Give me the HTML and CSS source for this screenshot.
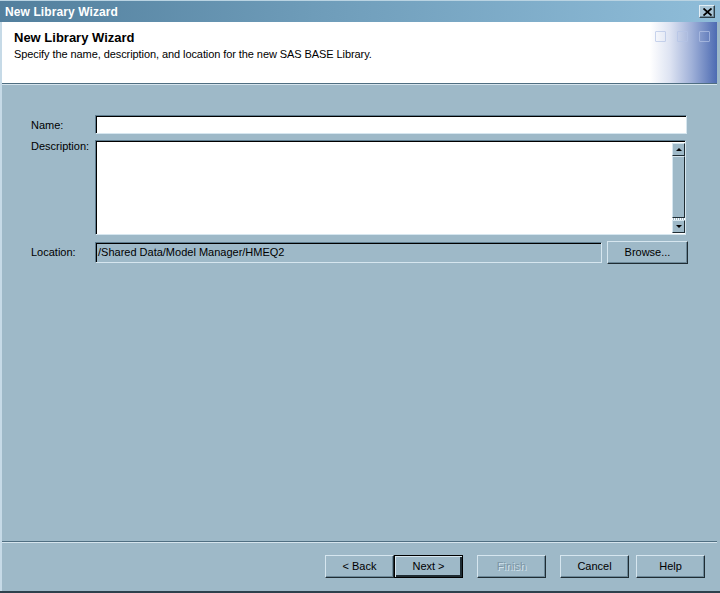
FILE: index.html
```html
<!DOCTYPE html>
<html>
<head>
<meta charset="utf-8">
<title>New Library Wizard</title>
<link rel="stylesheet" href="styles.css">
</head>
<body>
<div class="window">
  <div class="titlebar">
    <span class="title-text">New Library Wizard</span>
    <button class="close-btn" aria-label="Close">
      <svg width="9" height="8" viewBox="0 0 9 8"><path d="M0.5 0.5 L8.5 7.5 M8.5 0.5 L0.5 7.5" stroke="#000" stroke-width="1.8" fill="none"/></svg>
    </button>
  </div>
  <div class="frame">
    <div class="header">
      <div class="header-text">
        <div class="header-title">New Library Wizard</div>
        <div class="header-sub">Specify the name, description, and location for the new SAS BASE Library.</div>
      </div>
      <div class="header-marks">
        <span class="mark"></span><span class="mark"></span><span class="mark"></span>
      </div>
    </div>
    <div class="header-rule"></div>
    <div class="content">
      <div class="row row-name">
        <label class="label">Name:</label>
        <div class="field field-name"></div>
      </div>
      <div class="row row-desc">
        <label class="label label-top">Description:</label>
        <div class="field field-desc">
          <div class="desc-body"></div>
          <div class="scrollbar">
            <div class="sb-btn"><span class="tri-up"></span></div>
            <div class="sb-thumb"></div>
            <div class="sb-track"></div>
            <div class="sb-btn"><span class="tri-down"></span></div>
          </div>
        </div>
      </div>
      <div class="row row-loc">
        <label class="label label-loc">Location:</label>
        <div class="field field-loc">/Shared Data/Model Manager/HMEQ2</div>
        <button class="btn btn-browse">Browse...</button>
      </div>
    </div>
    <div class="footer">
      <button class="btn">&lt; Back</button>
      <button class="btn btn-default">Next &gt;</button>
      <button class="btn btn-disabled gap-l">Finish</button>
      <button class="btn gap-l">Cancel</button>
      <button class="btn gap-s">Help</button>
    </div>
  </div>
</div>
</body>
</html>
```

FILE: styles.css
```css
html, body {
  margin: 0;
  padding: 0;
  background: #9eb9c8;
}
body {
  font-family: "Liberation Sans", Arial, sans-serif;
  font-size: 11px;
  color: #000;
}
.window {
  width: 720px;
  height: 593px;
  box-sizing: border-box;
  display: flex;
  flex-direction: column;
  background: #9eb9c8;
  border-bottom: 2px solid #2e414d;
}
.titlebar {
  height: 22px;
  flex: none;
  display: flex;
  align-items: center;
  padding-left: 5px;
  padding-right: 5px;
  box-sizing: border-box;
  background: linear-gradient(to right, #527f9d 0%, #6f9dba 45%, #8fbdd9 100%);
  border-top: 1px solid #b9d3e2;
}
.title-text {
  flex: 1;
  color: #fff;
  font-weight: bold;
  font-size: 12px;
  letter-spacing: 0.1px;
}
.close-btn {
  width: 16px;
  height: 13px;
  padding: 0;
  margin: 0;
  display: flex;
  align-items: center;
  justify-content: center;
  background: #a9c5d6;
  border: 1px solid;
  border-color: #e2eef5 #2f3f48 #2f3f48 #e2eef5;
  box-shadow: inset -1px -1px #6d8a9b;
}
.frame {
  flex: 1;
  display: flex;
  flex-direction: column;
  border-left: 2px solid #c6dae7;
  border-right: 3px solid #9eb9c8;
}
.header {
  height: 61px;
  flex: none;
  display: flex;
  align-items: flex-start;
  background: linear-gradient(to right, #ffffff 0px, #ffffff 648px, #dde3f2 668px, #9fb0d8 690px, #4d6bb2 100%);
}
.header-text {
  flex: 1;
  padding: 8px 0 0 12px;
}
.header-title {
  font-weight: bold;
  font-size: 13px;
  line-height: 16px;
}
.header-sub {
  line-height: 14px;
  margin-top: 1px;
  letter-spacing: -0.08px;
}
.header-marks {
  display: flex;
  gap: 11px;
  padding: 9px 7px 0 0;
}
.mark {
  width: 9px;
  height: 9px;
  border: 1px solid rgba(180, 195, 230, 0.7);
  border-radius: 1px;
}
.header-rule {
  height: 1px;
  flex: none;
  background: #4f6e81;
  border-bottom: 1px solid #d6e5ee;
}
.content {
  flex: 1;
  padding: 30px 29px 0 29px;
  display: flex;
  flex-direction: column;
  gap: 6px;
}
.row {
  display: flex;
  align-items: center;
}
.row-desc {
  align-items: flex-start;
}
.label {
  width: 64px;
  flex: none;
}
.label-top {
  padding-top: 0px;
}
.label-loc {
  padding-bottom: 1px;
}
.field {
  flex: 1;
  box-sizing: border-box;
  border: 1px solid;
  border-color: #5e7c8e #d6e6ef #d6e6ef #5e7c8e;
  box-shadow: inset 1px 1px #000;
  background: #fff;
}
.row-name {
  margin-right: 1px;
}
.field-name {
  height: 19px;
}
.row-desc {
  margin-right: 2px;
}
.field-desc {
  height: 95px;
  display: flex;
  padding: 2px 0 1px 2px;
}
.desc-body {
  flex: 1;
}
.scrollbar {
  width: 13px;
  display: flex;
  flex-direction: column;
}
.sb-btn, .sb-thumb {
  box-sizing: border-box;
  background: #9eb9c8;
  border: 1px solid;
  border-color: #d6e6ef #1f2c33 #1f2c33 #d6e6ef;
  display: flex;
  align-items: center;
  justify-content: center;
}
.sb-btn {
  height: 13px;
  flex: none;
}
.sb-thumb {
  flex: 1;
}
.sb-track {
  height: 2px;
  flex: none;
  background: repeating-linear-gradient(to right, #fff 0 1px, #9eb9c8 1px 2px);
}
.tri-up {
  width: 0;
  height: 0;
  border-left: 3px solid transparent;
  border-right: 3px solid transparent;
  border-bottom: 3px solid #000;
}
.tri-down {
  width: 0;
  height: 0;
  border-left: 3px solid transparent;
  border-right: 3px solid transparent;
  border-top: 3px solid #000;
}
.field-loc {
  height: 21px;
  background: #9eb9c8;
  padding: 0 0 0 2px;
  line-height: 18px;
  margin-right: 5px;
}
.btn {
  width: 69px;
  height: 23px;
  flex: none;
  box-sizing: border-box;
  padding: 0 0 2px 0;
  margin: 0;
  font-family: "Liberation Sans", Arial, sans-serif;
  font-size: 11px;
  color: #000;
  background: #9eb9c8;
  border: 1px solid;
  border-color: #d6e6ef #1f2c33 #1f2c33 #d6e6ef;
  box-shadow: inset -1px -1px #6c8898;
}
.btn-browse {
  width: 81px;
}
.btn-default {
  border: 1px solid #000;
  box-shadow: inset 1px 1px #d6e6ef, inset -2px -2px #1f2c33;
}
.btn-disabled {
  color: #7b95a4;
  text-shadow: 1px 1px #d2e2ec;
}
.gap-l {
  margin-left: 14px;
}
.gap-s {
  margin-left: 7px;
}
.footer {
  flex: none;
  height: 50px;
  box-sizing: border-box;
  border-top: 1px solid #506f82;
  box-shadow: inset 0 1px #d6e5ee;
  display: flex;
  align-items: flex-start;
  justify-content: flex-end;
  padding: 13px 12px 0 0;
}
```
